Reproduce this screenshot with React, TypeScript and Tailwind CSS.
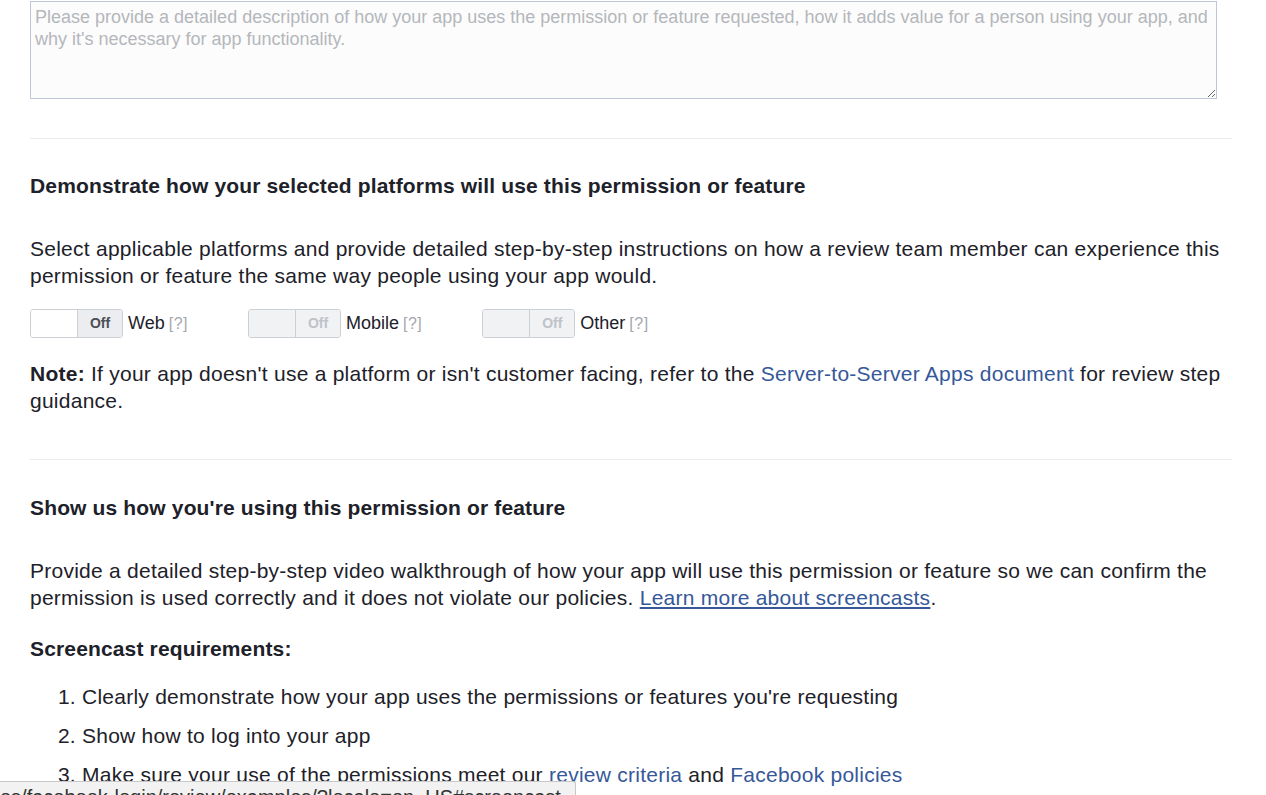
import React from 'react';

function Toggle({ label, disabled }: { label: string; disabled?: boolean }) {
    return (
        <div className="flex items-center mr-[60px]">
            <div className="flex h-[29px] w-[93px] rounded-[3px] border border-[#ccd0d5] overflow-hidden">
                <div className={`w-[47px] h-full border-r border-[#ccd0d5] ${disabled ? 'bg-[#f1f2f4]' : 'bg-white'}`} />
                <div className={`flex-1 flex items-center justify-center text-[14px] font-bold ${disabled ? 'bg-[#f1f2f4] text-[#bec3c9]' : 'bg-[#ebedf0] text-[#4b4f56]'}`}>
                    Off
                </div>
            </div>
            <span className="ml-[5px] text-[18px] text-[#1d2129]">{label}</span>
            <span className="ml-[4px] text-[16px] tracking-[0.5px] text-[#a4a8ae]">[?]</span>
        </div>
    );
}

export default function App() {
    return (
        <div className="relative min-h-[795px] bg-white font-['Liberation_Sans',Arial,sans-serif] text-[#1d2129] overflow-hidden">
            <div className="pl-[30px] w-[1232px]">
                <textarea
                    className="block mt-px w-[1187px] h-[98px] border border-[#bdc7d8] bg-[#fcfcfc] px-[4px] py-[4px] text-[18px] leading-[22px] placeholder:text-[#b4b7bb] resize-y outline-none"
                    placeholder="Please provide a detailed description of how your app uses the permission or feature requested, how it adds value for a person using your app, and why it's necessary for app functionality."
                />

                <div className="mt-[39px] border-t border-[#e9ebee]" />

                <h3 className="mt-[34px] text-[21px] tracking-[0.15px] leading-[26px] font-bold">
                    Demonstrate how your selected platforms will use this permission or feature
                </h3>
                <p className="mt-[36px] text-[21px] tracking-[0.25px] leading-[27px]">
                    Select applicable platforms and provide detailed step-by-step instructions on how a review team member can experience this permission or feature the same way people using your app would.
                </p>

                <div className="mt-[20px] flex items-center">
                    <Toggle label="Web" />
                    <Toggle label="Mobile" disabled />
                    <Toggle label="Other" disabled />
                </div>

                <p className="mt-[22px] text-[21px] tracking-[0.25px] leading-[27px]">
                    <b>Note:</b> If your app doesn't use a platform or isn't customer facing, refer to the{' '}
                    <a className="text-[#365899]">Server-to-Server Apps document</a> for review step guidance.
                </p>

                <div className="mt-[45px] border-t border-[#e9ebee]" />

                <h3 className="mt-[35px] text-[21px] tracking-[0.15px] leading-[26px] font-bold">
                    Show us how you're using this permission or feature
                </h3>
                <p className="mt-[36px] text-[21px] tracking-[0.25px] leading-[27px]">
                    Provide a detailed step-by-step video walkthrough of how your app will use this permission or feature so we can confirm the permission is used correctly and it does not violate our policies.{' '}
                    <a className="text-[#365899] underline">Learn more about screencasts</a>.
                </p>

                <h4 className="mt-[25px] text-[21px] tracking-[0.15px] leading-[26px] font-bold">Screencast requirements:</h4>
                <ol className="mt-[21px] pl-[52px] list-decimal text-[21px] tracking-[0.25px] leading-[27px] space-y-[12px]">
                    <li>Clearly demonstrate how your app uses the permissions or features you're requesting</li>
                    <li>Show how to log into your app</li>
                    <li>
                        Make sure your use of the permissions meet our <a className="text-[#365899]">review criteria</a> and{' '}
                        <a className="text-[#365899]">Facebook policies</a>
                    </li>
                </ol>
            </div>

            <div className="absolute left-0 top-[781px] w-[576px] h-[20px] bg-[#f2f2f2] border-t border-r border-[#c8c8c8] rounded-tr-[3px] overflow-hidden">
                <span className="block pt-[5px] text-[20px] leading-[20px] text-[#333] whitespace-nowrap">
                    es/facebook-login/review/examples/?locale=en_US#screencast
                </span>
            </div>
        </div>
    );
}
